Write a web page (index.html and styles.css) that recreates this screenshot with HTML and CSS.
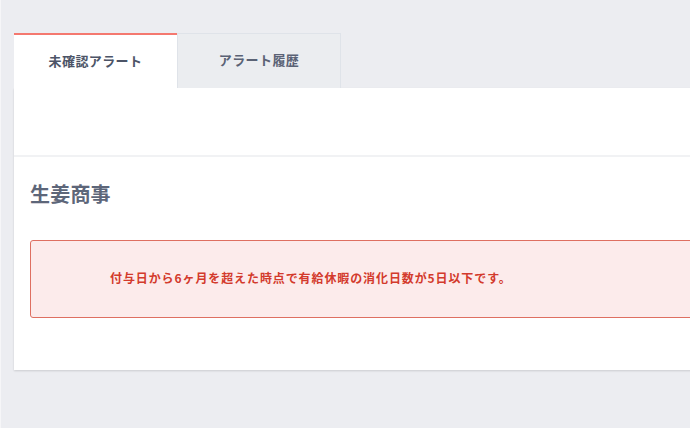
FILE: index.html
```html
<!DOCTYPE html>
<html lang="ja">
<head>
<meta charset="utf-8">
<link rel="stylesheet" href="styles.css">
</head>
<body>
<div class="page">
  <div class="tabs">
    <div class="tab tab-active">未確認アラート</div>
    <div class="tab">アラート履歴</div>
  </div>
  <div class="panel">
    <div class="panel-top"></div>
    <div class="panel-body">
      <h2 class="company">生姜商事</h2>
      <div class="alert">付与日から6ヶ月を超えた時点で有給休暇の消化日数が5日以下です。</div>
    </div>
  </div>
</div>
</body>
</html>
```
FILE: styles.css
```css
html, body {
  margin: 0;
  padding: 0;
  height: 100%;
}
body {
  background: #ecedf1;
  overflow: hidden;
  font-family: "Noto Sans CJK JP", "Noto Sans", sans-serif;
  border-left: 1px solid #f6f6f8;
  box-sizing: border-box;
}
.page {
  padding: 33px 0 0 13px;
  width: 800px;
}
.tabs {
  display: flex;
  height: 55px;
}
.tab {
  width: 164px;
  box-sizing: border-box;
  display: flex;
  align-items: center;
  justify-content: center;
  padding-bottom: 3px;
  font-size: 13px;
  font-weight: 700;
  color: #5a6275;
  background: #ebedf0;
  border: 1px solid #dfe3e9;
  border-bottom: none;
  letter-spacing: 0.4px;
}
.tab-active {
  width: 163px;
  background: #ffffff;
  border: none;
  border-top: 2px solid #f4786f;
  color: #4c5467;
}
.panel {
  background: #ffffff;
  box-shadow: 0 1px 2px rgba(0, 0, 0, 0.14);
}
.panel-top {
  height: 67px;
  border-bottom: 2px solid #f1f2f4;
}
.panel-body {
  padding: 22px 0 52px 16px;
}
.company {
  margin: 0;
  font-size: 20px;
  line-height: 30px;
  font-weight: 700;
  color: #5d6679;
  letter-spacing: 0.2px;
}
.alert {
  margin-top: 31px;
  height: 78px;
  box-sizing: border-box;
  display: flex;
  align-items: center;
  padding-left: 79px;
  padding-bottom: 3px;
  background: #fcebeb;
  border: 1.5px solid #de6f61;
  border-radius: 3px;
  color: #d33a2c;
  font-size: 12px;
  font-weight: 700;
  letter-spacing: 0.9px;
}
```
